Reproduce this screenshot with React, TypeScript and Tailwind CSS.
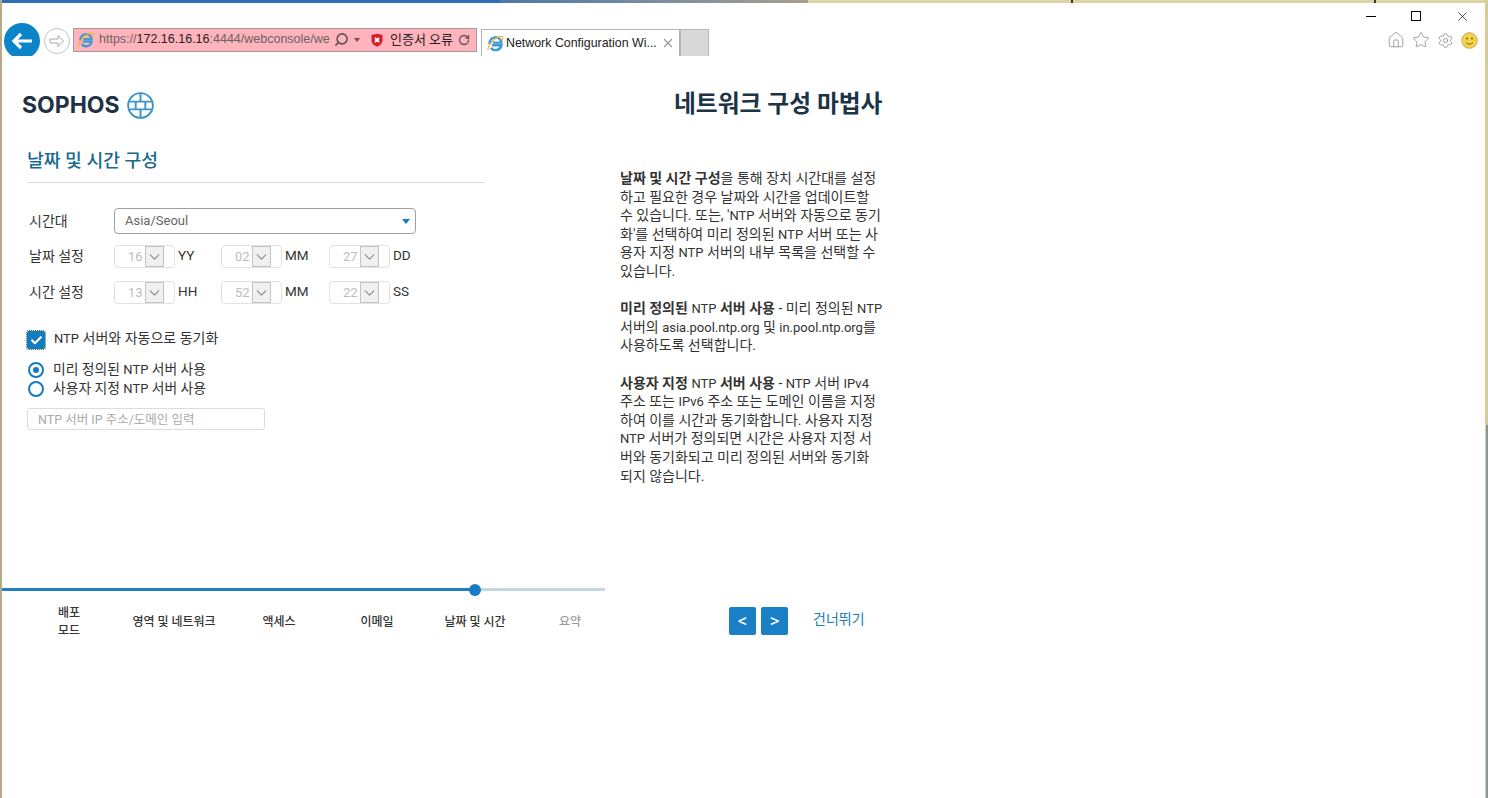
import { Check, ChevronDown, Home, RotateCw, Search, Settings, Star, X } from "lucide-react"
import type { ReactNode } from "react"

const BODY_FONT = "font-['Roboto','Noto_Sans_CJK_KR',sans-serif]"

// latin runs are a bit smaller than the korean around them in the reference
function L({ children }: { children: ReactNode }) {
    return <span className="text-[13px] leading-none">{children}</span>
}

function IeIcon({ size = 20 }: { size?: number }) {
    return (
        <svg width={size} height={size} viewBox="0 0 20 20" className="shrink-0">
            <path d="M3 10.500a7 7 0 0 1 14-1.500H7M6 12h11a7 7 0 0 1-12.500 3" fill="none" stroke="#3f9ad6" strokeWidth="2.800" />
            <path d="M1.500 18C-.5 14.500 8 3.500 15 1.800c3.500-.8 4.300 1.500 3 4.700" fill="none" stroke="#f0b429" strokeWidth="1.500" />
        </svg>
    )
}

function ShieldIcon() {
    return (
        <svg width="14" height="14" viewBox="0 0 14 14" className="shrink-0">
            <path d="M1.500 2 7 .8 12.500 2v5.500C12.500 10.500 9.500 12.800 7 13.700 4.500 12.800 1.500 10.500 1.500 7.500z" fill="#d3202c" />
            <path d="M5 5l4 4M9 5 5 9" stroke="#fff" strokeWidth="1.800" />
        </svg>
    )
}

function Logo() {
    return (
        <div className="flex items-center gap-[7px]">
            <span className="font-['Inter',sans-serif] text-[23px] leading-none font-bold tracking-normal text-[#1d3345]">SOPHOS</span>
            <svg width="27" height="27" viewBox="0 0 28 28" fill="none" stroke="#3f94c6" strokeWidth="2">
                <circle cx="14" cy="14" r="12.800" />
                <path d="M2.500 10h23M2.500 18h23M14 1.500V10M9 10v8M19 10v8M14 18v8.500" />
            </svg>
        </div>
    )
}

function Spin({ value, unit, className }: { value: string; unit: string; className: string }) {
    return (
        <div className={`flex items-center ${className}`}>
            <div className="flex items-center justify-between w-[61px] h-[23px] pl-[13px] pr-[10px] border border-[#e2e2e2] rounded-[4px] text-[13px] text-[#bcbcbc]">
                <span>{value}</span>
                <span className="flex items-center justify-center w-[19px] h-[21px] bg-[#f0f0f0] border border-[#c4c4c4]">
                    <ChevronDown size={18} strokeWidth={1.600} color="#8a8a8a" />
                </span>
            </div>
            <span className="ml-[3px] -mt-[3px] text-[13.500px] text-[#333]">{unit}</span>
        </div>
    )
}

function DateRow({ label, items, className }: { label: string; items: [string, string][]; className: string }) {
    return (
        <div className={`flex items-center ${className}`}>
            <span className="w-[85px] text-[14px] text-[#333]">{label}</span>
            <Spin value={items[0][0]} unit={items[0][1]} className="w-[107px]" />
            <Spin value={items[1][0]} unit={items[1][1]} className="w-[108px]" />
            <Spin value={items[2][0]} unit={items[2][1]} className="" />
        </div>
    )
}

function Radio({ children, on }: { children: ReactNode; on?: boolean }) {
    return (
        <label className="flex items-center h-[19px] text-[13.800px] text-[#333]">
            <span className="flex items-center justify-center w-[16px] h-[16px] ml-px mr-[9px] rounded-full border-[2.500px] border-[#127cc0]">
                {on && <span className="w-[6px] h-[6px] rounded-full bg-[#127cc0]" />}
            </span>
            <span>{children}</span>
        </label>
    )
}

const steps = [
    { label: "배포\n모드", w: "w-[98px]", color: "text-[#333]" },
    { label: "영역 및 네트워크", w: "w-[112px]", color: "text-[#333]" },
    { label: "액세스", w: "w-[98px]", color: "text-[#333]" },
    { label: "이메일", w: "w-[98px]", color: "text-[#333]" },
    { label: "날짜 및 시간", w: "w-[98px]", color: "text-[#333]" },
    { label: "요약", w: "w-[92px]", color: "text-[#9a9a9a]" },
]

export default function App() {
    return (
        <div className={`relative flex flex-col w-[1488px] h-[798px] overflow-hidden bg-white ${BODY_FONT}`}>
            {/* desktop showing around the window */}
            <div className="flex h-[3px] shrink-0">
                <div className="w-[500px] h-full bg-[#2f6fb8]" />
                <div className="w-[308px] h-full bg-gradient-to-r from-[#4a78a8] to-[#a8a090]" />
                <div className="w-[263px] h-full bg-[#e0d3a4]" />
                <div className="w-[2px] h-full bg-[#3a3426]" />
                <div className="w-[301px] h-full bg-[#e0d3a4]" />
                <div className="w-[2px] h-full bg-[#3a3426]" />
                <div className="flex-1 h-full bg-[#e0d3a4]" />
            </div>
            <div className="absolute left-0 top-0 w-[2px] h-full bg-[#b8aa88]" />
            <div className="absolute right-0 top-0 w-[3px] h-[425px] bg-[#d8cb9a]" />
            <div className="absolute right-0 top-[425px] w-[3px] h-[373px] bg-[#7f9a98] border-l border-[#e0d3a4]" />

            {/* window buttons */}
            <div className="flex justify-end items-center h-[26px] shrink-0 pr-[18px]">
                <span className="w-[10px] h-[1.500px] bg-black mt-[1px] mr-[35px]" />
                <span className="w-[10px] h-[10px] border border-black mr-[34px]" />
                <X size={15} strokeWidth={1.100} color="#000" />
            </div>

            {/* browser toolbar */}
            <div className="flex items-center h-[27px] shrink-0 pl-[4px] text-[12px]">
                <div className="self-end w-[36px] h-[33px] overflow-hidden shrink-0">
                    <div className="flex items-center justify-center w-[36px] h-[36px] rounded-full bg-[#0c85c8]">
                        <svg width="22" height="18" viewBox="0 0 22 18" fill="none" stroke="#fff" strokeWidth="3.200">
                            <path d="M21 9H4M10 2 3 9l7 7" />
                        </svg>
                    </div>
                </div>
                <div className="flex items-center justify-center w-[26px] h-[26px] ml-[4px] mr-[3px] -mt-[3px] rounded-full border border-[#c4c4c4] shrink-0">
                    <svg width="16" height="14" viewBox="0 0 16 14" fill="none" stroke="#a8a8a8" strokeWidth="1">
                        <path d="M1 5h8V1.500L14.500 7 9 12.500V9H1z" />
                    </svg>
                </div>
                <div className="flex items-center w-[404px] h-[24px] -mt-[6px] pl-[4px] pr-[6px] border border-[#a89a9a] bg-[#ffb3ba] shrink-0">
                    <IeIcon size={16} />
                    <span className="ml-[5px] w-[235px] overflow-hidden whitespace-nowrap font-['Liberation_Sans','Roboto',sans-serif] text-[12.500px] text-[#6a6266]">
                        https://<span className="text-[#222]">172.16.16.16</span>:4444/webconsole/we
                    </span>
                    <Search size={15} strokeWidth={2.600} color="#5f5658" className="-scale-x-100" />
                    <span className="ml-[5px] w-0 h-0 border-x-[3.500px] border-x-transparent border-t-[4px] border-t-[#5f5658]" />
                    <span className="ml-[10px]"><ShieldIcon /></span>
                    <span className="ml-[6px] text-[13px] whitespace-nowrap text-[#222]">인증서 오류</span>
                    <RotateCw size={12} strokeWidth={2.600} color="#5f5658" className="ml-auto" />
                </div>
                <div className="flex items-center w-[199px] h-[27px] ml-[4px] pl-[5px] pr-[4px] border-x border-t border-[#b4b4b4] shrink-0">
                    <IeIcon size={17} />
                    <span className="ml-[2px] font-['Liberation_Sans',sans-serif] text-[12.400px] whitespace-nowrap text-[#222]">Network Configuration Wi...</span>
                    <X size={14} strokeWidth={2.200} color="#9a9a9a" className="ml-auto" />
                </div>
                <div className="w-[29px] h-[27px] bg-[#d9d9d9] border-x border-t border-[#b8b8b8] shrink-0" />
                <div className="flex items-center gap-[7px] ml-auto mr-[10px] -mt-[5px]">
                    <Home size={18} strokeWidth={1.100} color="#8e8e8e" />
                    <Star size={18} strokeWidth={1.100} color="#8e8e8e" />
                    <Settings size={17} strokeWidth={1.200} color="#8e8e8e" />
                    <svg width="17" height="17" viewBox="0 0 17 17">
                        <circle cx="8.500" cy="8.500" r="7.800" fill="#f4d24a" stroke="#c8a860" />
                        <circle cx="6" cy="6.500" r="1" fill="#7a5a10" />
                        <circle cx="11" cy="6.500" r="1" fill="#7a5a10" />
                        <path d="M5 10.500c1.800 2.200 5.200 2.200 7 0" fill="none" stroke="#7a5a10" />
                    </svg>
                </div>
            </div>

            {/* page header */}
            <div className="flex items-center h-[64px] pt-[34px] shrink-0">
                <div className="w-[605px] pl-[22px]">
                    <Logo />
                </div>
                <h1 className="ml-[69px] -mt-[1px] text-[23.750px] font-bold whitespace-nowrap text-[#1b3446]">네트워크 구성 마법사</h1>
            </div>

            {/* form and help */}
            <div className="flex h-[469px] shrink-0">
                <div className="w-[605px] shrink-0 pl-[27px]">
                    <div className="w-[458px] h-[63px] pt-[28px] border-b border-[#d9d9d9]">
                        <h2 className="text-[18.250px] leading-[26px] font-medium text-[#17698e]">날짜 및 시간 구성</h2>
                    </div>
                    <div className="flex items-center pl-[2px] mt-[25px]">
                        <span className="w-[85px] text-[14px] text-[#333]">시간대</span>
                        <div className="flex items-center justify-between w-[302px] h-[26px] pl-[10px] pr-[5px] border border-[#a0a0a0] rounded-[4px] text-[13px] text-[#666]">
                            Asia/Seoul
                            <span className="w-0 h-0 border-x-[4.500px] border-x-transparent border-t-[5px] border-t-[#127cc0]" />
                        </div>
                    </div>
                    <DateRow label="날짜 설정" items={[["16", "YY"], ["02", "MM"], ["27", "DD"]]} className="pl-[2px] mt-[11px]" />
                    <DateRow label="시간 설정" items={[["13", "HH"], ["52", "MM"], ["22", "SS"]]} className="pl-[2px] mt-[13px]" />
                    <div className="flex items-center mt-[27px]">
                        <span className="flex items-center justify-center w-[18px] h-[18px] rounded-[2px] bg-[#127cc0] outline-1 outline-dotted outline-[#555]">
                            <Check size={13} strokeWidth={4} color="#fff" />
                        </span>
                        <span className="ml-[9px] -mt-[3px] text-[14px] text-[#333]"><L>NTP</L> 서버와 자동으로 동기화</span>
                    </div>
                    <div className="mt-[11px]">
                        <Radio on>미리 정의된 <L>NTP</L> 서버 사용</Radio>
                        <Radio>사용자 지정 <L>NTP</L> 서버 사용</Radio>
                    </div>
                    <input
                        type="text"
                        placeholder="NTP 서버 IP 주소/도메인 입력"
                        className="block w-[238px] h-[22px] mt-[10px] px-[10px] border border-[#dcdcdc] rounded-[3px] text-[12.500px] placeholder:text-[#aaa]"
                    />
                </div>
                <div className="pl-[15px] pt-[49px] text-[14px] leading-[18.600px] text-[#333] whitespace-nowrap">
                    <p><b>날짜 및 시간 구성</b>을 통해 장치 시간대를 설정<br />하고 필요한 경우 날짜와 시간을 업데이트할<br />수 있습니다. 또는, '<L>NTP</L> 서버와 자동으로 동기<br />화'를 선택하여 미리 정의된 <L>NTP</L> 서버 또는 사<br />용자 지정 <L>NTP</L> 서버의 내부 목록을 선택할 수<br />있습니다.</p>
                    <p className="mt-[18.600px]"><b>미리 정의된</b> <L>NTP</L> <b>서버 사용</b> - 미리 정의된 <L>NTP</L><br />서버의 <L>asia.pool.ntp.org</L> 및 <L>in.pool.ntp.org</L>를<br />사용하도록 선택합니다.</p>
                    <p className="mt-[18.600px]"><b>사용자 지정</b> <L>NTP</L> <b>서버 사용</b> - <L>NTP</L> 서버 <L>IPv4</L><br />주소 또는 <L>IPv6</L> 주소 또는 도메인 이름을 지정<br />하여 이를 시간과 동기화합니다. 사용자 지정<br /><L>NTP</L> 서버가 정의되면 시간은 사용자 지정 서<br />버와 동기화되고 미리 정의된 서버와 동기화<br />되지 않습니다.</p>
                </div>
            </div>

            {/* progress and navigation */}
            <div className="flex shrink-0">
                <div className="w-[605px] shrink-0 pl-[2px]">
                    <div className="relative flex h-[3px] mt-[-1px]">
                        <div className="w-[473px] h-full bg-[#2180c0]" />
                        <div className="flex-1 h-full bg-[#c2d9e4]" />
                        <span className="absolute left-[467px] -top-[4px] w-[12px] h-[12px] rounded-full bg-[#1a7cc4]" />
                    </div>
                    <div className="flex items-center h-[58px] mt-[1px] pl-[18px] pt-[2px]">
                        {steps.map((s) => (
                            <div key={s.label} className={`${s.w} shrink-0 text-center text-[12px] leading-[18px] font-medium whitespace-pre-line ${s.color}`}>
                                {s.label}
                            </div>
                        ))}
                    </div>
                </div>
                <div className="flex items-center h-[28px] ml-[124px] mt-[18px]">
                    <button className="flex items-center justify-center w-[27px] h-[28px] rounded-[2px] bg-[#1a80c6] text-[19px] text-white">&lt;</button>
                    <button className="flex items-center justify-center w-[27px] h-[28px] ml-[5px] rounded-[2px] bg-[#1a80c6] text-[19px] text-white">&gt;</button>
                    <a className="ml-[25px] -mt-[4px] text-[14px] text-[#1a7ea8]">건너뛰기</a>
                </div>
            </div>
        </div>
    )
}
